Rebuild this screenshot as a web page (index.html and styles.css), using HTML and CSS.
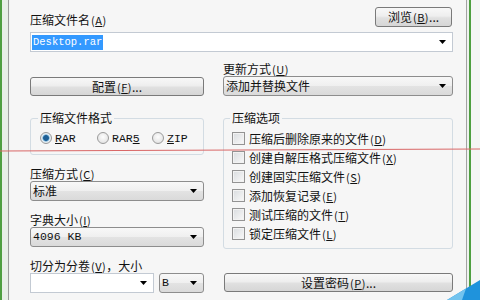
FILE: index.html
```html
<!DOCTYPE html>
<html lang="zh-CN">
<head>
<meta charset="utf-8">
<title>压缩文件名和参数</title>
<link rel="stylesheet" href="styles.css">
</head>
<body>
<div class="screen">
  <div class="edge-left"></div>
  <div class="dialog">
    <div class="row-top">
      <span class="lbl">压缩文件名<span class="acc">(<u>A</u>)</span></span>
      <div class="btn btn-browse">浏览<span class="acc">(<u>B</u>)</span>...</div>
    </div>
    <div class="combo edit name-combo"><span class="sel">Desktop.rar</span><i class="arrow"></i></div>
    <div class="cols row-mid">
      <div class="col col-end">
        <div class="btn btn-wide">配置<span class="acc">(<u>F</u>)</span>...</div>
      </div>
      <div class="col">
        <span class="lbl lbl-up">更新方式<span class="acc">(<u>U</u>)</span></span>
        <div class="combo drop"><span class="txt">添加并替换文件</span><i class="arrow"></i></div>
      </div>
    </div>
    <div class="cols row-main">
      <div class="col col-stack">
        <fieldset class="group fmt">
          <legend>压缩文件格式</legend>
          <div class="radios">
            <span class="radio on"><i></i><span class="lat"><u>R</u>AR</span></span>
            <span class="radio"><i></i><span class="lat">RAR<u>5</u></span></span>
            <span class="radio"><i></i><span class="lat"><u>Z</u>IP</span></span>
          </div>
        </fieldset>
        <div class="field">
          <span class="lbl">压缩方式<span class="acc">(<u>C</u>)</span></span>
          <div class="combo drop"><span class="txt">标准</span><i class="arrow"></i></div>
        </div>
        <div class="field">
          <span class="lbl">字典大小<span class="acc">(<u>I</u>)</span></span>
          <div class="combo drop"><span class="txt lat">4096 KB</span><i class="arrow"></i></div>
        </div>
        <div class="field">
          <span class="lbl">切分为分卷<span class="acc">(<u>V</u>)</span>，大小</span>
          <div class="split">
            <div class="combo edit vol"><span class="txt"></span><i class="arrow"></i></div>
            <div class="combo drop unit"><span class="txt lat">B</span><i class="arrow"></i></div>
          </div>
        </div>
      </div>
      <div class="col">
        <fieldset class="group opts">
          <legend>压缩选项</legend>
          <span class="chk"><i></i>压缩后删除原来的文件<span class="acc">(<u>D</u>)</span></span>
          <span class="chk"><i></i>创建自解压格式压缩文件<span class="acc">(<u>X</u>)</span></span>
          <span class="chk"><i></i>创建固实压缩文件<span class="acc">(<u>S</u>)</span></span>
          <span class="chk"><i></i>添加恢复记录<span class="acc">(<u>E</u>)</span></span>
          <span class="chk"><i></i>测试压缩的文件<span class="acc">(<u>T</u>)</span></span>
          <span class="chk"><i></i>锁定压缩文件<span class="acc">(<u>L</u>)</span></span>
        </fieldset>
        <div class="btn btn-pass">设置密码<span class="acc">(<u>P</u>)</span>...</div>
      </div>
    </div>
  </div>
  <div class="edge-right"></div>
  <svg class="overlay" width="480" height="300" viewBox="0 0 480 300">
    <line x1="0" y1="151" x2="480" y2="149" stroke="#d96868" stroke-width="1.2"/>
    <polygon points="447,300 480,280 480,300" fill="#1f93dc"/>
    <polygon points="447,300 466,288.5 462,300" fill="#72c3ee"/>
  </svg>
</div>
</body>
</html>
```

FILE: styles.css
```css
* { box-sizing: border-box; margin: 0; padding: 0; }

body {
  width: 480px;
  height: 300px;
  overflow: hidden;
  background: #f4f4f4;
  font-family: "Noto Sans CJK SC", "Noto Sans", sans-serif;
  font-size: 12px;
  color: #111;
}

.screen {
  position: relative;
  display: flex;
  width: 480px;
  height: 300px;
}

.edge-left {
  flex: none;
  width: 10px;
  background: linear-gradient(to right, #4f9f41 0 2px, #e8efe7 2px 8px, #9c9c9c 8px 9px, #f3f3f3 9px);
}

.edge-right {
  flex: 1;
  background: linear-gradient(to right, #a3a3a3 0 1px, #eef2ee 1px 3px, #4f9f41 3px 5px, #f5f5f5 5px);
}

.dialog {
  flex: none;
  width: 456px;
  background: #f6f6f6;
  padding: 7px 13px 0 20px;
}

.lbl {
  display: block;
  line-height: 14px;
  white-space: nowrap;
}

.acc {
  font-size: 11px;
  margin-left: 1px;
  letter-spacing: 0.5px;
}

.lat {
  font-family: "Liberation Mono", monospace;
  font-size: 11.5px;
}

.row-top {
  display: flex;
  justify-content: space-between;
  align-items: flex-end;
  height: 20px;
}

.btn {
  display: flex;
  align-items: center;
  justify-content: center;
  height: 20px;
  border: 1px solid #7a7a7a;
  border-radius: 3px;
  background: linear-gradient(#f8f8f8, #eeeeee 45%, #e0e0e0 55%, #d6d6d6);
  line-height: 14px;
  white-space: nowrap;
}

.btn-browse { width: 77px; margin-right: 1px; }
.btn-wide { width: 174px; height: 19px; }
.btn-pass { margin-top: 24px; height: 19px; margin-left: 1px; }

.combo {
  display: flex;
  align-items: center;
  height: 20px;
}

.combo.edit {
  background: #fff;
  border: 1px solid #c3cad3;
}

.combo.drop {
  border: 1px solid #8d8d8d;
  border-radius: 3px;
  background: linear-gradient(#f8f8f8, #efefef 50%, #e3e3e3 50%, #dadada);
}

.combo .txt {
  padding-left: 2px;
  white-space: nowrap;
  line-height: 14px;
}

.arrow {
  display: block;
  flex: none;
  width: 7px;
  height: 4px;
  margin: 0 6px 0 auto;
  background: #000;
  clip-path: polygon(0 0, 100% 0, 50% 100%);
}

.name-combo { margin-top: 5px; }

.sel {
  margin-left: 1px;
  padding: 0 1px;
  background: #3399ff;
  color: #fff;
  font-family: "Liberation Mono", monospace;
  font-size: 10.5px;
  line-height: 15px;
}

.cols {
  display: grid;
  grid-template-columns: 174px 230px;
  column-gap: 19px;
}

.row-mid { margin-top: 10px; }
.col-end { display: flex; align-items: flex-end; }
.lbl-up { line-height: 13px; }

.row-main { margin-top: 15px; }

.col-stack {
  display: flex;
  flex-direction: column;
  gap: 12px;
}

.group {
  border: 1px solid #d3dce3;
  border-radius: 3px;
  min-width: 0;
}

.group legend {
  padding: 0 2px;
  margin-left: -2px;
  line-height: 14px;
}

.fmt { padding: 6px 9px 9px; }
.opts { padding: 4px 8px 5px; }

.radios {
  display: grid;
  grid-template-columns: 57px 55px auto;
  height: 14px;
  align-items: center;
}

.radio {
  display: flex;
  align-items: center;
  gap: 3px;
}

.radio i {
  display: block;
  width: 12px;
  height: 12px;
  border: 1px solid #9a9a9a;
  border-radius: 50%;
  background: radial-gradient(circle at 50% 40%, #fdfdfd, #dcdcdc);
}

.radio.on i {
  background: radial-gradient(circle, #1e5f95 0 2.5px, #5a9cc8 3px, #e8f1f7 4px, #d6dde2);
}

.chk {
  display: flex;
  align-items: center;
  height: 19px;
  white-space: nowrap;
}

.chk i {
  display: block;
  flex: none;
  width: 13px;
  height: 13px;
  margin-right: 4px;
  border: 1px solid #939393;
  background: linear-gradient(135deg, #d9dcdf, #f9f9f9);
  box-shadow: inset 0 0 0 1px #f2f2f2;
}

.split {
  display: flex;
  gap: 5px;
}

.vol { width: 124px; }
.unit { width: 45px; }
.unit .arrow { margin-right: 6px; }

.overlay {
  position: absolute;
  left: 0;
  top: 0;
  pointer-events: none;
}
```
